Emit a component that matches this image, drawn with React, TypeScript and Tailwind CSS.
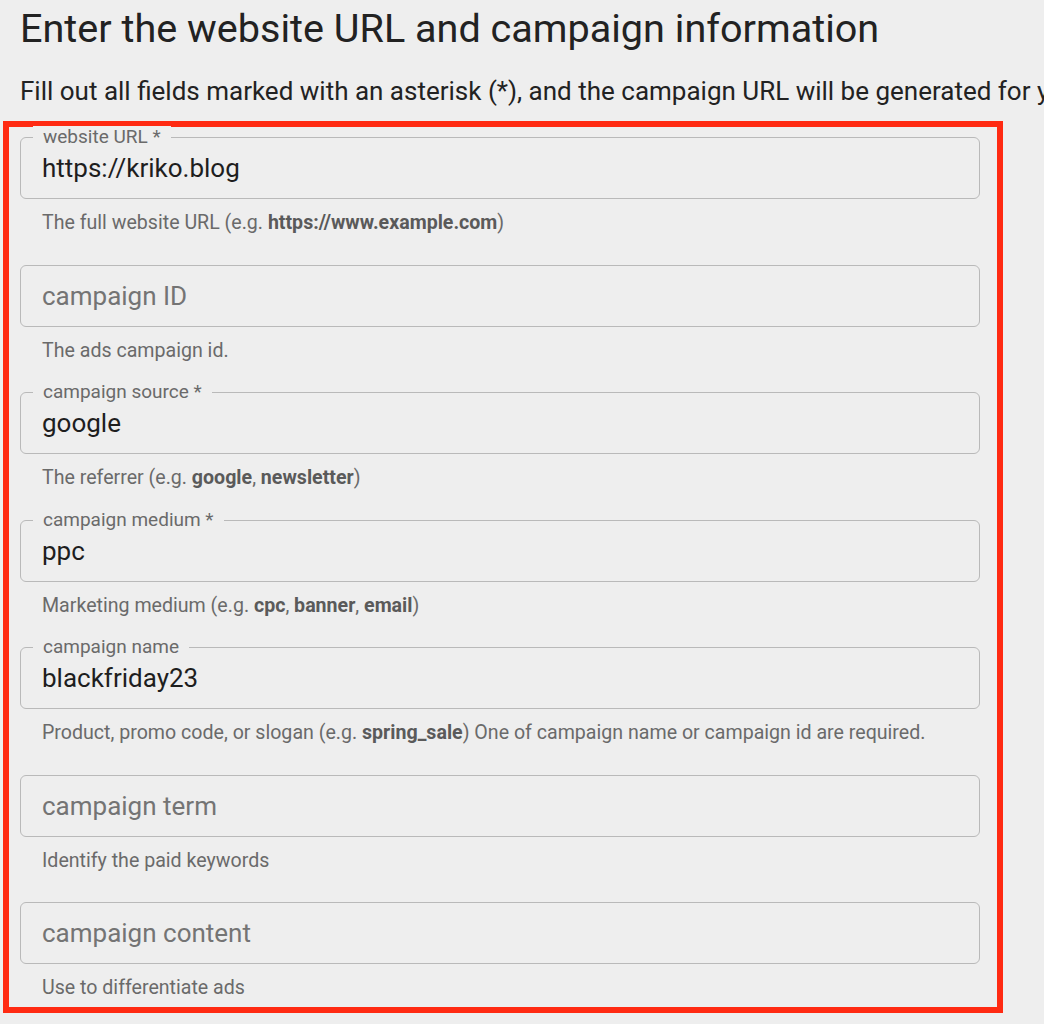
import React from "react";

type Field = {
  label: string;
  required?: boolean;
  value?: string;
  helper: React.ReactNode;
};

const fields: Field[] = [
  {
    label: "website URL",
    required: true,
    value: "https://kriko.blog",
    helper: (
      <>
        The full website URL (e.g. <b className="font-bold text-[#5a5a5a]">https://www.example.com</b>)
      </>
    ),
  },
  { label: "campaign ID", helper: "The ads campaign id." },
  {
    label: "campaign source",
    required: true,
    value: "google",
    helper: (
      <>
        The referrer (e.g. <b className="font-bold text-[#5a5a5a]">google</b>,{" "}
        <b className="font-bold text-[#5a5a5a]">newsletter</b>)
      </>
    ),
  },
  {
    label: "campaign medium",
    required: true,
    value: "ppc",
    helper: (
      <>
        Marketing medium (e.g. <b className="font-bold text-[#5a5a5a]">cpc</b>,{" "}
        <b className="font-bold text-[#5a5a5a]">banner</b>, <b className="font-bold text-[#5a5a5a]">email</b>)
      </>
    ),
  },
  {
    label: "campaign name",
    value: "blackfriday23",
    helper: (
      <>
        Product, promo code, or slogan (e.g. <b className="font-bold text-[#5a5a5a]">spring_sale</b>) One of
        campaign name or campaign id are required.
      </>
    ),
  },
  { label: "campaign term", helper: "Identify the paid keywords" },
  { label: "campaign content", helper: "Use to differentiate ads" },
];

function OutlinedField({ field }: { field: Field }) {
  const filled = !!field.value;
  return (
    <div className="flex flex-col">
      <div className="relative h-[62px] rounded-[6px] border border-[#b9b9b9]">
        {filled && (
          <span className="absolute -top-[12px] left-[12px] bg-[#eeeeee] px-[10px] text-[19px] leading-[22px] text-[#6a6a6a]">
            {field.label}
            {field.required && " *"}
          </span>
        )}
        <input
          readOnly
          defaultValue={field.value}
          placeholder={filled ? undefined : field.label}
          className="h-full w-full bg-transparent px-[21px] text-[26px] text-[#1e1e1e] outline-none placeholder:text-[#747474]"
        />
      </div>
      <p className="mt-[9px] h-[33px] pl-[22px] text-[19.6px] leading-[30px] text-[#6a6a6a]">{field.helper}</p>
    </div>
  );
}

export default function App() {
  return (
    <div
      className="min-h-[1024px] w-[1044px] overflow-hidden bg-[#eeeeee]"
      style={{ fontFamily: "Roboto, 'Noto Sans', sans-serif" }}
    >
      <h1 className="pl-[20px] pt-[5px] text-[39.6px] leading-[48px] text-[#222]">
        Enter the website URL and campaign information
      </h1>
      <p className="mt-[23px] overflow-hidden whitespace-nowrap pl-[20px] text-[26px] leading-[30px] text-[#222]">
        Fill out all fields marked with an asterisk (*), and the campaign URL will be generated for you.
      </p>
      <div className="ml-[3px] mt-[15px] w-[1000px] border-[6px] border-[#ff2a12] pb-[1px] pl-[11px] pr-[17px] pt-[10px]">
        <div className="flex flex-col gap-[23.5px]">
          {fields.map((f) => (
            <OutlinedField key={f.label} field={f} />
          ))}
        </div>
      </div>
    </div>
  );
}
